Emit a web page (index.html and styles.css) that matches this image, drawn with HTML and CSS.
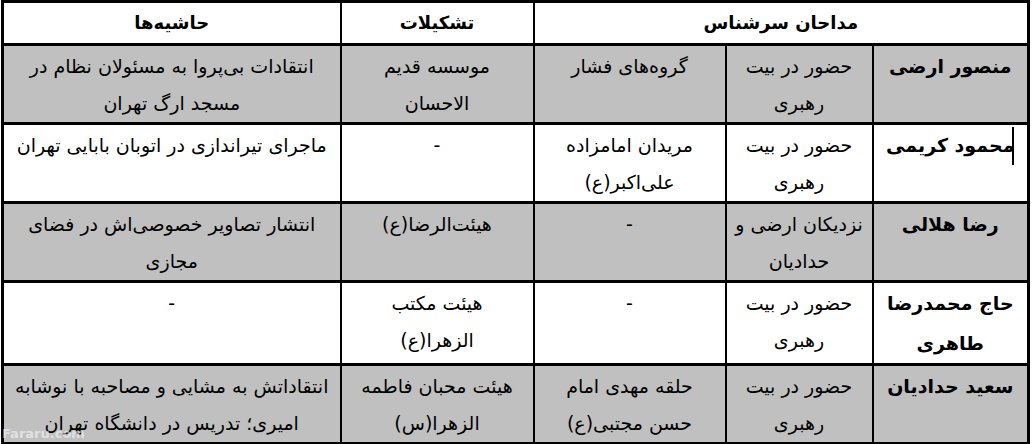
FILE: index.html
```html
<!DOCTYPE html>
<html lang="fa" dir="rtl">
<head>
<meta charset="utf-8">
<title>مداحان سرشناس</title>
<link rel="stylesheet" href="styles.css">
</head>
<body>
<div class="page">
  <table class="grid">
    <colgroup>
      <col class="c-name">
      <col class="c-bayt">
      <col class="c-group">
      <col class="c-org">
      <col class="c-note">
    </colgroup>
    <thead>
      <tr class="head">
        <th colspan="3">مداحان سرشناس</th>
        <th>تشکیلات</th>
        <th>حاشیه‌ها</th>
      </tr>
    </thead>
    <tbody>
      <tr class="gray">
        <td class="name">منصور ارضی</td>
        <td>حضور در بیت<br>رهبری</td>
        <td>گروه‌های فشار</td>
        <td>موسسه قدیم<br>الاحسان</td>
        <td>انتقادات بی‌پروا به مسئولان نظام در<br>مسجد ارگ تهران</td>
      </tr>
      <tr class="white">
        <td class="name"><span class="cursor"></span>محمود کریمی</td>
        <td>حضور در بیت<br>رهبری</td>
        <td>مریدان امامزاده<br>علی‌اکبر(ع)</td>
        <td>-</td>
        <td>ماجرای تیراندازی در اتوبان بابایی تهران</td>
      </tr>
      <tr class="gray">
        <td class="name">رضا هلالی</td>
        <td>نزدیکان ارضی و<br>حدادیان</td>
        <td>-</td>
        <td>هیئت‌الرضا(ع)</td>
        <td>انتشار تصاویر خصوصی‌اش در فضای<br>مجازی</td>
      </tr>
      <tr class="white">
        <td class="name">حاج محمدرضا<br>طاهری</td>
        <td>حضور در بیت<br>رهبری</td>
        <td>-</td>
        <td>هیئت مکتب<br>الزهرا(ع)</td>
        <td>-</td>
      </tr>
      <tr class="gray">
        <td class="name">سعید حدادیان</td>
        <td>حضور در بیت<br>رهبری</td>
        <td>حلقه مهدی امام<br>حسن مجتبی(ع)</td>
        <td>هیئت محبان فاطمه<br>الزهرا(س)</td>
        <td>انتقاداتش به مشایی و مصاحبه با نوشابه<br>امیری؛ تدریس در دانشگاه تهران</td>
      </tr>
    </tbody>
  </table>
  <div class="watermark" dir="ltr">Fararu.com</div>
</div>
</body>
</html>
```

FILE: styles.css
```css
html, body {
  margin: 0;
  padding: 0;
  background: #ffffff;
}

.page {
  position: relative;
  width: 1032px;
  height: 444px;
  padding: 0 2px 0 4px;
  box-sizing: border-box;
  overflow: hidden;
}

.grid {
  width: 1026px;
  table-layout: fixed;
  border-collapse: collapse;
  font-family: "DejaVu Sans", sans-serif;
  color: #000000;
  border: 3px solid #000000;
}

.c-name { width: 156px; }
.c-bayt { width: 147px; }
.c-group { width: 192px; }
.c-org { width: 193px; }
.c-note { width: 338px; }

.grid th,
.grid td {
  border-left: 2px solid #000000;
  border-right: 2px solid #000000;
  border-top: 3px solid #000000;
  border-bottom: 3px solid #000000;
  text-align: center;
  padding: 0 3px;
}

.head th {
  font-size: 18px;
  font-weight: bold;
  line-height: 40px;
  background: #ffffff;
}

.grid td {
  font-size: 19px;
  font-weight: normal;
  line-height: 37px;
  vertical-align: top;
  padding-top: 2px;
  position: relative;
}

.grid td.name {
  font-size: 19px;
  font-weight: bold;
  line-height: 40px;
  padding-top: 0;
}

.gray td { background: #c0c0c0; }
.white td { background: #ffffff; }

.cursor {
  position: absolute;
  top: 2px;
  right: 13px;
  width: 2px;
  height: 38px;
  background: #000000;
}

.watermark {
  position: absolute;
  left: 2px;
  top: 426px;
  font-family: "DejaVu Sans", sans-serif;
  font-size: 13px;
  font-weight: bold;
  color: rgba(255, 255, 255, 0.55);
}
```
